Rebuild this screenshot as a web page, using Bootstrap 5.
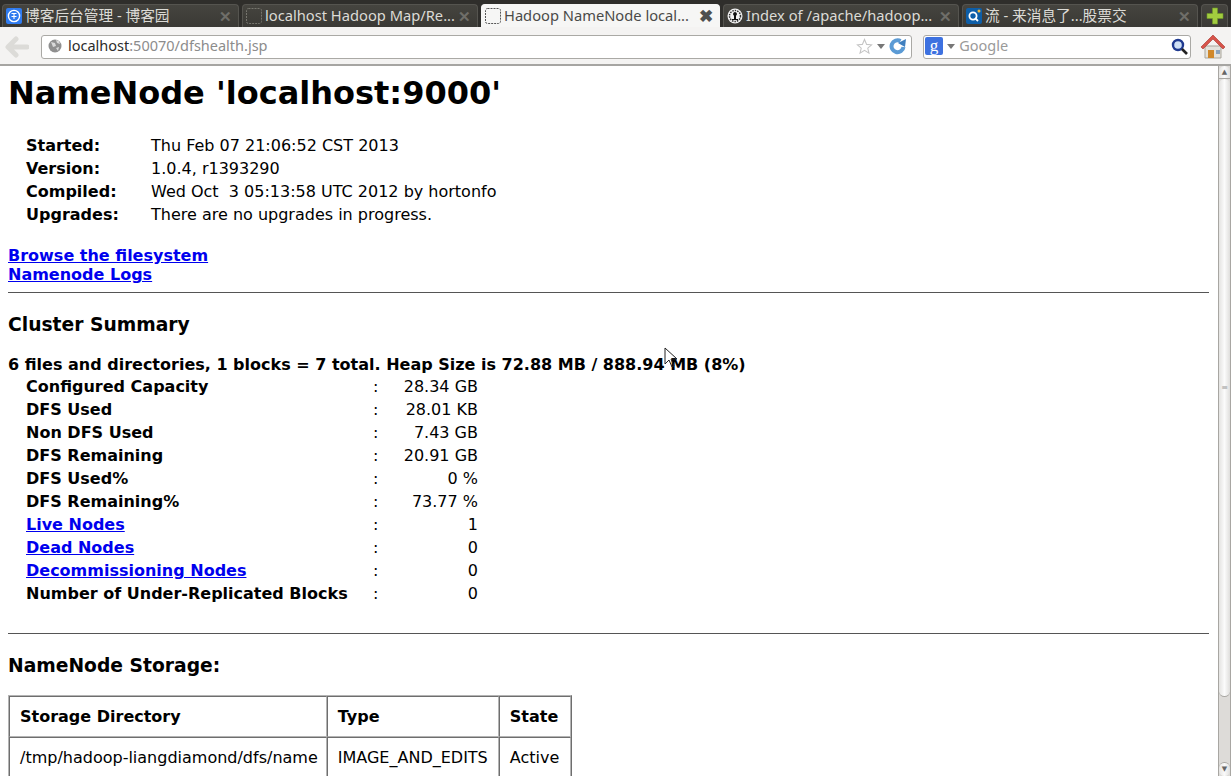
<!DOCTYPE html>
<html lang="en">
  <head>
    <meta charset="UTF-8" />
    <meta name="viewport" content="width=device-width, initial-scale=1.0" />
    <title>Hadoop NameNode localhost:9000</title>
    <link href="https://cdn.jsdelivr.net/npm/bootstrap@5.3.3/dist/css/bootstrap.min.css" rel="stylesheet" />
    <style>
      html, body { height: 776px; overflow: hidden; }
      body { font-family: "DejaVu Sans", sans-serif; font-size: 16px; color: #000; background: #fff; position: relative; }
      .tab-strip { height: 27px; background: #2f2e2b; padding: 4px 2px 0 2px; gap: 3px; font-family: "Noto Sans", "Noto Sans CJK SC", sans-serif; font-size: 14.7px; }
      .tab-item { width: 236px; height: 23px; background: linear-gradient(#45443f, #3a3935); border: 1px solid #55544f; border-bottom: 0; border-radius: 4px 4px 0 0; color: #dcdbd6; padding: 0 6px 0 3px; gap: 3px; white-space: nowrap; overflow: hidden; }
      .tab-item:first-child { width: 237px; }
      .tab-item.on { width: 239px; background: #f6f6f5; color: #4a4a48; border-color: #f6f6f5; }
      .tab-title { flex: 1 1 auto; overflow: hidden; line-height: 21px; padding-bottom: 2px; }
      .tab-x { color: #6f6e69; font-size: 15px; font-weight: 700; line-height: 20px; flex: 0 0 auto; }
      .tab-item.on .tab-x { color: #4f4f4f; font-size: 17px; }
      .tab-plus { width: 27px; height: 23px; background: linear-gradient(#45443f, #3a3935); border: 1px solid #55544f; border-bottom: 0; border-radius: 4px 4px 0 0; }
      .tool-bar { height: 39px; background: #f4f3f2; border-bottom: 2px solid #a6a5a2; padding: 8px 5px 0 5px; font-family: "Noto Sans", sans-serif; font-size: 14.5px; }
      .back-slot { width: 36px; }
      .field-box { height: 24px; background: #fff; border: 1px solid #aaa9a5; border-radius: 3px; padding: 0 4px 2px 6px; }
      .url-box { width: 872px; margin-right: 11px; }
      .search-box { width: 268px; margin-right: 9px; padding-left: 1px; padding-right: 2px; }
      .url-host { color: #2c2c2c; }
      .url-rest { color: #8c8c8c; }
      .search-hint { color: #9a9a9a; }
      .mini-caret { width: 0; height: 0; border-left: 4px solid transparent; border-right: 4px solid transparent; border-top: 5px solid #777; }
      .globe-icon { margin-right: 6px; }
      .home-icon { margin-top: -1px; }
      .page-area { height: 710px; overflow: hidden; }
      .page-body { flex: 1 1 auto; padding: 6px 9px 0 8px; min-width: 0; }
      .page-title { font-family: "DejaVu Sans", sans-serif; font-size: 32px; font-weight: 700; line-height: 38px; margin: 2px 0 22px; }
      .info-grid, .sum-grid { border-collapse: separate; border-spacing: 0; margin-left: 16px; line-height: 19px; }
      .info-grid td, .sum-grid td { padding: 2px; }
      .info-grid td:first-child { font-weight: 700; width: 125px; }
      .page-links { margin-top: 20px; font-weight: 700; line-height: 19px; }
      .page-links a, .sum-grid a { color: #00e; }
      .rule-line { border: 0; border-top: 1px solid #555; opacity: 1; margin: 0; }
      .rule-low { margin-top: 28px; }
      .sub-head { font-family: "DejaVu Sans", sans-serif; font-size: 18.72px; font-weight: 700; line-height: 22px; margin: 21px 0 19px; }
      .sub-head.store-head { margin-bottom: 18px; }
      .sum-line { font-weight: 700; line-height: 19px; margin-bottom: 1px; }
      .sum-grid td:first-child { font-weight: 700; width: 347px; }
      .sum-grid td:nth-child(2) { width: 25px; }
      .sum-grid td:nth-child(3) { width: 84px; text-align: right; }
      .store-grid { border-collapse: separate; border-spacing: 0; border: 1px solid; border-color: #b4b4b4 #6e6e6e #6e6e6e #b4b4b4; line-height: 19px; }
      .store-grid td, .store-grid th { padding: 10px; border: 1px solid; border-color: #6e6e6e #b4b4b4 #b4b4b4 #6e6e6e; font-weight: 400; }
      .store-grid th { font-weight: 700; }
      .store-grid tr > :first-child { padding-right: 8px; }
      .store-grid tr > :last-child { padding-right: 11px; }
      .scroll-rail { width: 13px; flex: 0 0 13px; background: #dddbd8; border-left: 1px solid #a8a6a2; border-right: 1px solid #a8a6a2; }
      .scroll-cap { height: 13px; background: linear-gradient(to right, #e6e5e3, #fafafa, #e0dfdd); border-bottom: 1px solid #a8a6a2; color: #666; font-size: 7px; line-height: 12px; text-align: center; }
      .scroll-cap.top { border-radius: 6px 6px 0 0; }
      .scroll-cap.end { height: 14px; border-top: 1px solid #a8a6a2; border-bottom: 0; border-radius: 6px 6px 6px 6px; }
      .scroll-thumb { height: 618px; background: linear-gradient(to right, #e4e3e1, #fbfbfb, #dfdedc); border-bottom: 1px solid #a8a6a2; border-radius: 6px; color: #999; font-size: 8px; }
      .scroll-spare { flex: 1 1 auto; }
      .mouse-arrow { position: absolute; left: 664px; top: 347px; }
    </style>
  </head>
  <body>
    <div class="tab-strip d-flex">
      <div class="tab-item d-flex align-items-center">
        <svg width="16" height="16" viewBox="0 0 16 16"><rect width="16" height="16" rx="2" fill="#2f7bf0"/><circle cx="8" cy="8" r="5.600" fill="none" stroke="#fff" stroke-width="1.400"/><path d="M5.500 5.500h5M8 5.500v5.500M5.500 8.500h5" stroke="#fff" stroke-width="1.100" fill="none"/></svg>
        <span class="tab-title">博客后台管理 - 博客园</span><span class="tab-x">✕</span>
      </div>
      <div class="tab-item d-flex align-items-center">
        <svg width="16" height="16" viewBox="0 0 16 16"><rect x=".5" y=".5" width="15" height="15" rx="2" fill="none" stroke="#77766f" stroke-dasharray="2 1"/></svg>
        <span class="tab-title">localhost Hadoop Map/Re...</span><span class="tab-x">✕</span>
      </div>
      <div class="tab-item on d-flex align-items-center">
        <svg width="16" height="16" viewBox="0 0 16 16"><rect x=".5" y=".5" width="15" height="15" rx="2" fill="none" stroke="#555" stroke-dasharray="2 1"/></svg>
        <span class="tab-title">Hadoop NameNode local...</span><span class="tab-x">✖</span>
      </div>
      <div class="tab-item d-flex align-items-center">
        <svg width="16" height="16" viewBox="0 0 16 16"><circle cx="8" cy="8" r="7.500" fill="#f2f2f2"/><circle cx="8" cy="8" r="5.500" fill="none" stroke="#333" stroke-width="1.500" stroke-dasharray="1.500 1"/><path d="M8 4a2 2 0 0 1 1 3.700V11h2v1H5v-1h2V7.700A2 2 0 0 1 8 4z" fill="#111"/></svg>
        <span class="tab-title">Index of /apache/hadoop...</span><span class="tab-x">✕</span>
      </div>
      <div class="tab-item d-flex align-items-center">
        <svg width="16" height="16" viewBox="0 0 16 16"><rect width="16" height="16" rx="2" fill="#0d5ea8"/><circle cx="7" cy="8" r="3.600" fill="none" stroke="#fff" stroke-width="1.800"/><path d="M9 10l3 3" stroke="#fff" stroke-width="1.800"/><circle cx="13" cy="3" r="1.500" fill="#f0b73a"/></svg>
        <span class="tab-title">流 - 来消息了...股票交</span><span class="tab-x">✕</span>
      </div>
      <div class="tab-plus d-flex align-items-center justify-content-center">
        <svg width="18" height="18" viewBox="0 0 18 18"><path d="M6.500 1h5v5.500H17v5h-5.500V17h-5v-5.500H1v-5h5.500z" fill="#a2cc3f" stroke="#6f9a25" stroke-width=".6"/></svg>
      </div>
    </div>
    <div class="tool-bar d-flex">
      <div class="back-slot d-flex align-items-start">
        <svg width="24" height="24" viewBox="0 0 24 24"><path d="M11 4l-8 8 8 8M4 12h18" fill="none" stroke="#dcdbd8" stroke-width="5" stroke-linecap="round" stroke-linejoin="round"/></svg>
      </div>
      <div class="field-box url-box d-flex align-items-center">
        <svg class="globe-icon" width="14" height="14" viewBox="0 0 14 14"><circle cx="7" cy="7" r="6.500" fill="#8f8f8f"/><path d="M3 3l4 1 1 3-3 1zM8 9l3-1-1 4zM8 1l3 1 1 3-3-1z" fill="#d9d9d9"/></svg>
        <span><span class="url-host">localhost</span><span class="url-rest">:50070/dfshealth.jsp</span></span>
        <span class="ms-auto d-flex align-items-center gap-1">
          <svg width="17" height="17" viewBox="0 0 24 24"><path d="M12 2l3 7 7 .6-5.400 4.700 1.700 7L12 17.500 5.700 21.300l1.700-7L2 9.600 9 9z" fill="#fff" stroke="#c4c4c4" stroke-width="1.500"/></svg>
          <span class="mini-caret"></span>
          <svg width="18" height="18" viewBox="0 0 18 18"><path d="M14.500 10a6 6 0 1 1-3-6" fill="none" stroke="#5b9bd5" stroke-width="4"/><path d="M9 6l8-4-1 8z" fill="#3f7fbf"/></svg>
        </span>
      </div>
      <div class="field-box search-box d-flex align-items-center">
        <svg class="me-1" width="18" height="18" viewBox="0 0 18 18"><rect width="18" height="18" rx="2" fill="#3d71e0"/><text x="9" y="14" text-anchor="middle" font-family="Liberation Serif, serif" font-size="17" fill="#fff">g</text></svg>
        <span class="mini-caret me-1"></span>
        <span class="search-hint">Google</span>
        <svg class="ms-auto" width="17" height="17" viewBox="0 0 17 17"><circle cx="7" cy="7" r="5" fill="#cfe0f5" stroke="#1f3a90" stroke-width="2.400"/><path d="M11 11l5 5" stroke="#222" stroke-width="2.600"/></svg>
      </div>
      <svg class="home-icon" width="26" height="26" viewBox="0 0 26 26"><path d="M5 12h16v12H5z" fill="#e4e2dc" stroke="#a9a59c"/><path d="M1 13L13 1l12 12-2 2L13 5 3 15z" fill="#d8534a" stroke="#a5322a" stroke-width=".6"/><rect x="8" y="16" width="6" height="8" fill="#d0882a"/><rect x="16" y="16" width="4" height="4" fill="#8aa3bd"/></svg>
    </div>
    <div class="page-area d-flex">
      <div class="page-body">
        <h1 class="page-title">NameNode 'localhost:9000'</h1>
        <table class="info-grid">
          <tr><td>Started:</td><td>Thu Feb 07 21:06:52 CST 2013</td></tr>
          <tr><td>Version:</td><td>1.0.4, r1393290</td></tr>
          <tr><td>Compiled:</td><td>Wed Oct &nbsp;3 05:13:58 UTC 2012 by hortonfo</td></tr>
          <tr><td>Upgrades:</td><td>There are no upgrades in progress.</td></tr>
        </table>
        <div class="page-links mb-2">
          <a href="#">Browse the filesystem</a><br />
          <a href="#">Namenode Logs</a>
        </div>
        <hr class="rule-line" />
        <h2 class="sub-head">Cluster Summary</h2>
        <div class="sum-line">6 files and directories, 1 blocks = 7 total. Heap Size is 72.88 MB / 888.94 MB (8%)</div>
        <table class="sum-grid">
          <tr><td>Configured Capacity</td><td>:</td><td>28.34 GB</td></tr>
          <tr><td>DFS Used</td><td>:</td><td>28.01 KB</td></tr>
          <tr><td>Non DFS Used</td><td>:</td><td>7.43 GB</td></tr>
          <tr><td>DFS Remaining</td><td>:</td><td>20.91 GB</td></tr>
          <tr><td>DFS Used%</td><td>:</td><td>0 %</td></tr>
          <tr><td>DFS Remaining%</td><td>:</td><td>73.77 %</td></tr>
          <tr><td><a href="#">Live Nodes</a></td><td>:</td><td>1</td></tr>
          <tr><td><a href="#">Dead Nodes</a></td><td>:</td><td>0</td></tr>
          <tr><td><a href="#">Decommissioning Nodes</a></td><td>:</td><td>0</td></tr>
          <tr><td>Number of Under-Replicated Blocks</td><td>:</td><td>0</td></tr>
        </table>
        <hr class="rule-line rule-low" />
        <h2 class="sub-head store-head">NameNode Storage:</h2>
        <table class="store-grid">
          <tr><th>Storage Directory</th><th>Type</th><th>State</th></tr>
          <tr><td>/tmp/hadoop-liangdiamond/dfs/name</td><td>IMAGE_AND_EDITS</td><td>Active</td></tr>
        </table>
      </div>
      <div class="scroll-rail d-flex flex-column">
        <div class="scroll-cap top">▲</div>
        <div class="scroll-thumb d-flex align-items-center justify-content-center">≡</div>
        <div class="scroll-spare"></div>
        <div class="scroll-cap end">▼</div>
      </div>
    </div>
    <svg class="mouse-arrow" width="14" height="22" viewBox="0 0 14 22"><path d="M1 1v16l4-4 3 7 2-1-3-7h6z" fill="none" stroke="#222"/></svg>
  </body>
</html>
